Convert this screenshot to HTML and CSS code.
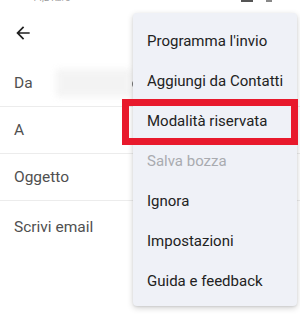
FILE: index.html
```html
<!DOCTYPE html>
<html lang="it">
<head>
<meta charset="utf-8">
<link rel="stylesheet" href="styles.css">
</head>
<body>
<div class="screen">
  <div class="status">
    <span class="speed">14,2 Kb/s</span>
    <span class="sicons"><span class="sbar"></span><span class="sbar small"></span></span>
  </div>
  <div class="header">
    <svg class="back" width="20" height="20" viewBox="0 0 24 24"><path d="M20 11H7.83l5.59-5.59L12 4l-8 8 8 8 1.41-1.41L7.83 13H20v-2z" fill="#1f1f1f"/></svg>
  </div>
  <div class="row from">
    <span class="label">Da</span>
    <span class="blur"></span>
    <span class="tail">d:</span>
  </div>
  <div class="row"><span class="label">A</span></div>
  <div class="row"><span class="label">Oggetto</span></div>
  <div class="body"><span class="label">Scrivi email</span></div>

  <div class="menu">
    <div class="item">Programma l'invio</div>
    <div class="item">Aggiungi da Contatti</div>
    <div class="item highlight">Modalità riservata</div>
    <div class="item disabled">Salva bozza</div>
    <div class="item">Ignora</div>
    <div class="item">Impostazioni</div>
    <div class="item">Guida e feedback</div>
  </div>
</div>
</body>
</html>
```
FILE: styles.css
```css
* { box-sizing: border-box; }
html, body { margin: 0; padding: 0; background: #fff; }
body { font-family: Roboto, "Noto Sans", sans-serif; }
.screen { position: relative; width: 300px; height: 324px; overflow: hidden; background: #fff; }

.status { height: 4px; overflow: hidden; display: flex; justify-content: space-between; padding: 0 28px 0 32px; }
.speed { font-size: 9px; line-height: 9px; color: #9a9a9a; margin-top: -6px; }
.sicons { display: flex; gap: 13px; }
.sbar { display: block; width: 12px; height: 2px; background: #555; }
.sbar.small { width: 6px; background: #888; }

.header { height: 56px; padding: 19px 0 0 13px; }
.back { display: block; }

.row { height: 47px; border-bottom: 1px solid #ececec; display: flex; align-items: center; padding-left: 14px; }
.label { font-size: 15.5px; color: #505050; }
.from { position: relative; }
.blur { display: block; width: 76px; height: 28px; margin-left: 23px; background: #eeeeee; filter: blur(3px); opacity: 0.65; }
.tail { font-size: 15.5px; color: #555; filter: blur(0.6px); }
.body { padding: 16px 0 0 14px; }

.menu { position: absolute; left: 133px; top: 13px; width: 164px; height: 293px; background: #eff1f7; border-radius: 4px; box-shadow: 0 2px 6px rgba(0,0,0,0.18), 0 1px 2px rgba(0,0,0,0.08); padding: 8px 0 5px; }
.item { height: 40px; display: flex; align-items: center; padding-left: 14px; font-size: 15px; color: #222; }
.item.disabled { color: #a9abb0; }
.item.highlight { position: relative; }
.item.highlight::before { content: ""; position: absolute; left: -11px; right: -1px; top: -2px; bottom: -4px; border: 7px solid #e8192c; background: transparent; }
```
